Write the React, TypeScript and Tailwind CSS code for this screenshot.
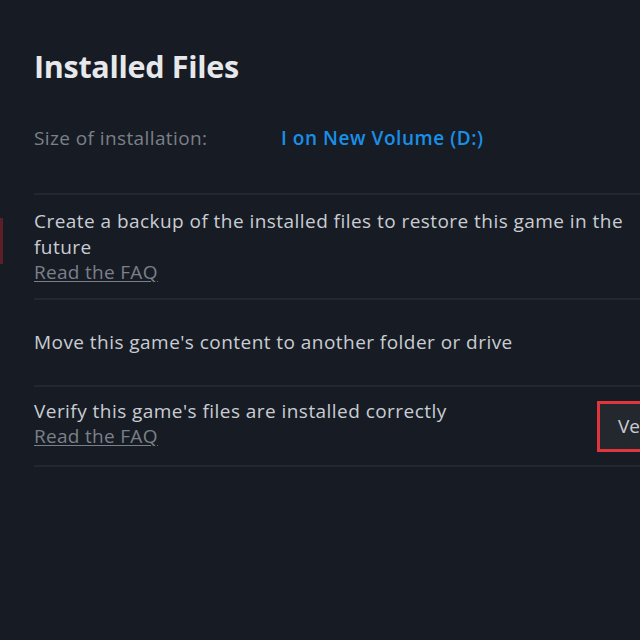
export default function App() {
  return (
    <div
      className="relative w-[640px] h-[640px] overflow-hidden bg-[#171c24] text-[#c9cdd3]"
      style={{ fontFamily: '"Open Sans", "Liberation Sans", sans-serif' }}
    >
      {/* left accent from sidebar */}
      <div className="absolute left-0 top-[218px] w-[3px] h-[46px] bg-[#5c1f27]" />

      <div className="pl-[34px] pt-[46px]">
        <h1 className="text-[30.5px] font-bold text-[#e6e8eb] leading-[40px] tracking-[-0.3px]">Installed Files</h1>

        <div className="flex items-center mt-[40px] h-[24px] text-[19px] tracking-[0.4px]">
          <span className="w-[247px] text-[#7b8088]">Size of installation:</span>
          <span className="text-[#1a8fe8] font-semibold tracking-[0.55px]">I on New Volume (D:)</span>
        </div>

        <div className="mt-[43px] border-t-2 border-[#222730]">
          <div className="h-[103px] pt-[14px]">
            <p className="text-[19px] leading-[25.5px] tracking-[0.45px]">
              Create a backup of the installed files to restore this game in the future
            </p>
            <a className="block text-[19px] leading-[25.5px] tracking-[0.3px] text-[#7b8088] underline underline-offset-2">Read the FAQ</a>
          </div>
        </div>

        <div className="border-t-2 border-[#222730]">
          <div className="h-[85px] flex items-center">
            <p className="text-[19px] leading-[25px] tracking-[0.45px]">Move this game&apos;s content to another folder or drive</p>
          </div>
        </div>

        <div className="border-t-2 border-[#222730]">
          <div className="h-[78px] flex items-center justify-between">
            <div className="mb-[4px]">
              <p className="text-[19px] leading-[25.5px] tracking-[0.45px]">Verify this game&apos;s files are installed correctly</p>
              <a className="block text-[19px] leading-[25.5px] tracking-[0.3px] text-[#7b8088] underline underline-offset-2">Read the FAQ</a>
            </div>
            <button className="shrink-0 h-[51px] w-[90px] mr-[-47px] border-[3px] border-[#e0353c] bg-[#23272e] text-left pl-[18px] text-[19px] text-[#c9cdd3]">
              Verify
            </button>
          </div>
        </div>

        <div className="border-t-2 border-[#222730]" />
      </div>
    </div>
  );
}
